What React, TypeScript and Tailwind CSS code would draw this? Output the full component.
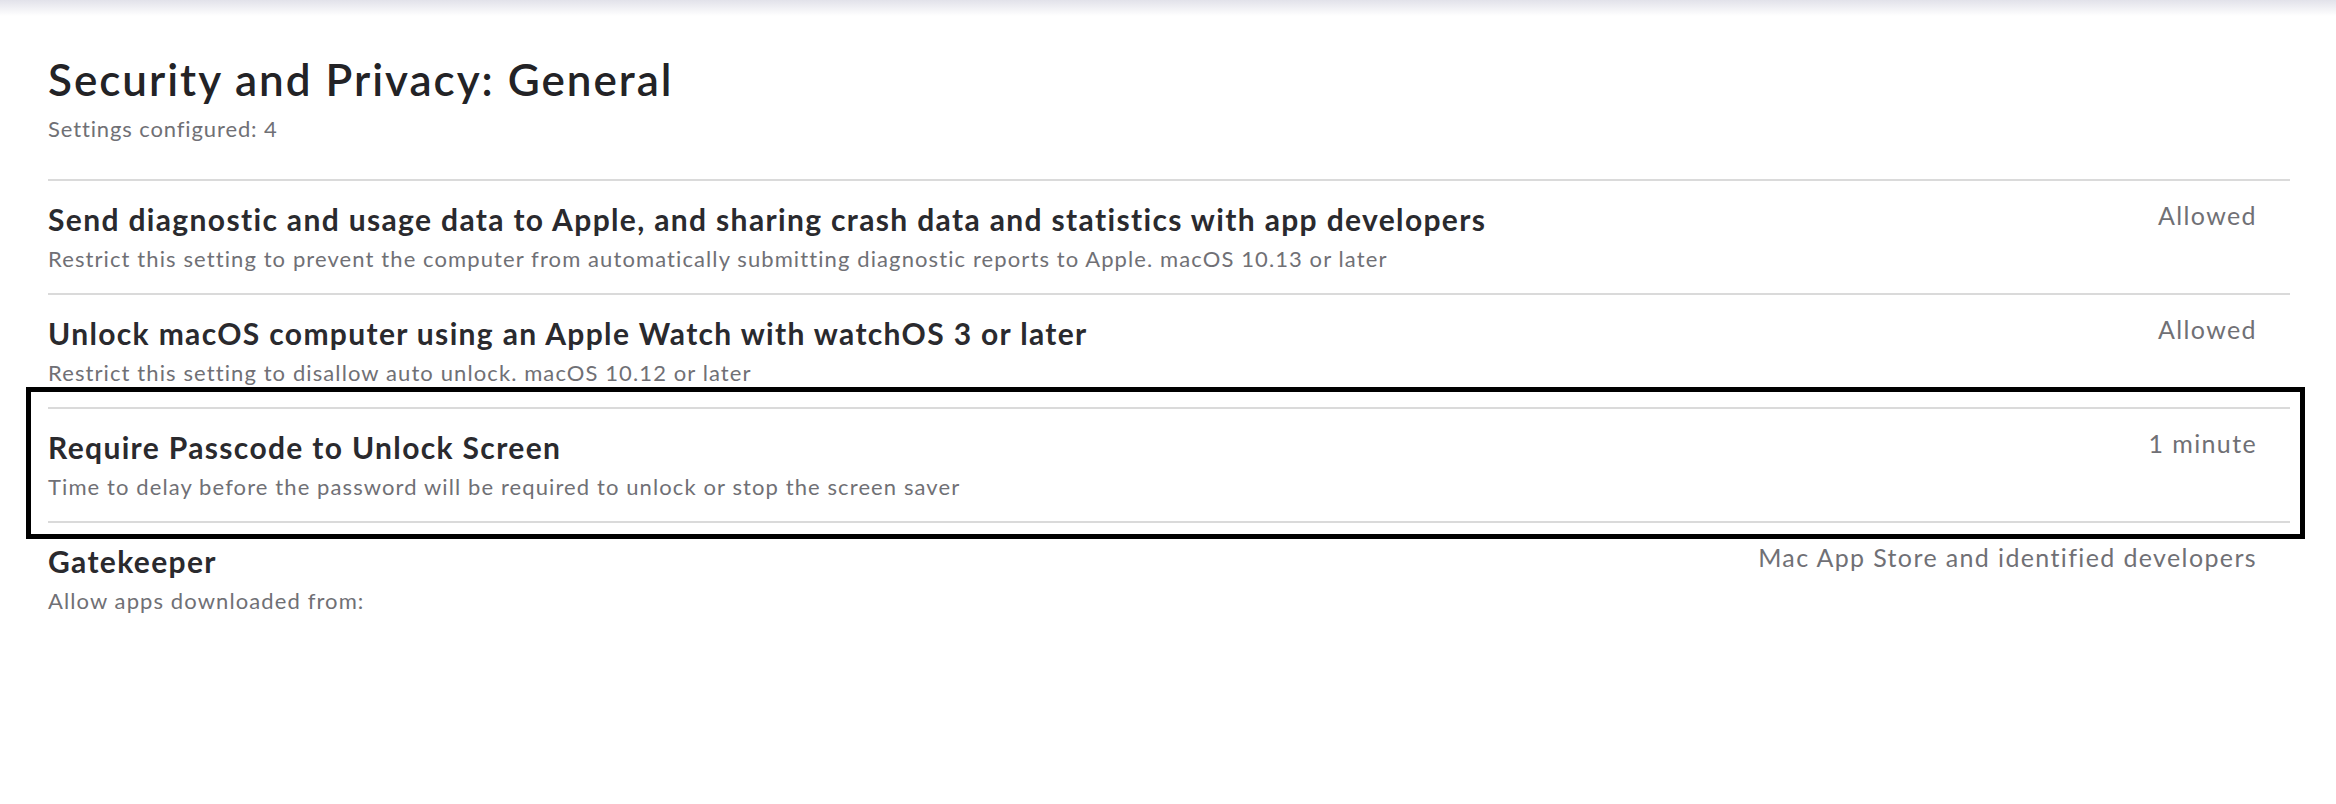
const settings = [
  {
    title:
      "Send diagnostic and usage data to Apple, and sharing crash data and statistics with app developers",
    description:
      "Restrict this setting to prevent the computer from automatically submitting diagnostic reports to Apple. macOS 10.13 or later",
    value: "Allowed",
  },
  {
    title: "Unlock macOS computer using an Apple Watch with watchOS 3 or later",
    description: "Restrict this setting to disallow auto unlock. macOS 10.12 or later",
    value: "Allowed",
  },
  {
    title: "Require Passcode to Unlock Screen",
    description:
      "Time to delay before the password will be required to unlock or stop the screen saver",
    value: "1 minute",
    highlighted: true,
  },
  {
    title: "Gatekeeper",
    description: "Allow apps downloaded from:",
    value: "Mac App Store and identified developers",
    last: true,
  },
];

interface SettingRowProps {
  title: string;
  description: string;
  value: string;
  highlighted?: boolean;
  last?: boolean;
}

function SettingRow({ title, description, value, highlighted, last }: SettingRowProps) {
  return (
    <div className="relative border-t-2 border-[#dadada]">
      <div className={`flex items-start justify-between gap-8 pt-[20px] ${last ? "pb-10" : "pb-[20px]"}`}>
        <div className="min-w-0">
          <h3 className="text-[30px] leading-[36px] font-bold tracking-[0.045em] text-[#2a2a2e]">{title}</h3>
          <p className="mt-2 text-[22px] leading-[28px] tracking-[0.05em] text-[#707075]">{description}</p>
        </div>
        <span className="shrink-0 pr-[33px] text-[25px] leading-[29px] tracking-[0.055em] text-[#707075]">
          {value}
        </span>
      </div>
      {highlighted && (
        <div className="pointer-events-none absolute -top-[22px] -bottom-[18px] -left-[22px] -right-[15px] border-[5px] border-black" />
      )}
    </div>
  );
}

export default function App() {
  return (
    <div className="min-h-screen bg-white font-['Lato','Liberation_Sans',sans-serif]">
      <div className="h-4 bg-linear-to-b from-[#e2e2ea] to-white" />
      <main className="pl-12 pr-[46px]">
        <header className="pt-[37px]">
          <h1 className="text-[44px] leading-[53px] font-semibold tracking-[0.045em] text-[#232326]">
            Security and Privacy: General
          </h1>
          <p className="mt-[10px] text-[22px] leading-[26px] tracking-[0.04em] text-[#707075]">
            Settings configured: 4
          </p>
        </header>
        <section className="mt-[37px]">
          {settings.map((s) => (
            <SettingRow key={s.title} {...s} />
          ))}
        </section>
      </main>
    </div>
  );
}
